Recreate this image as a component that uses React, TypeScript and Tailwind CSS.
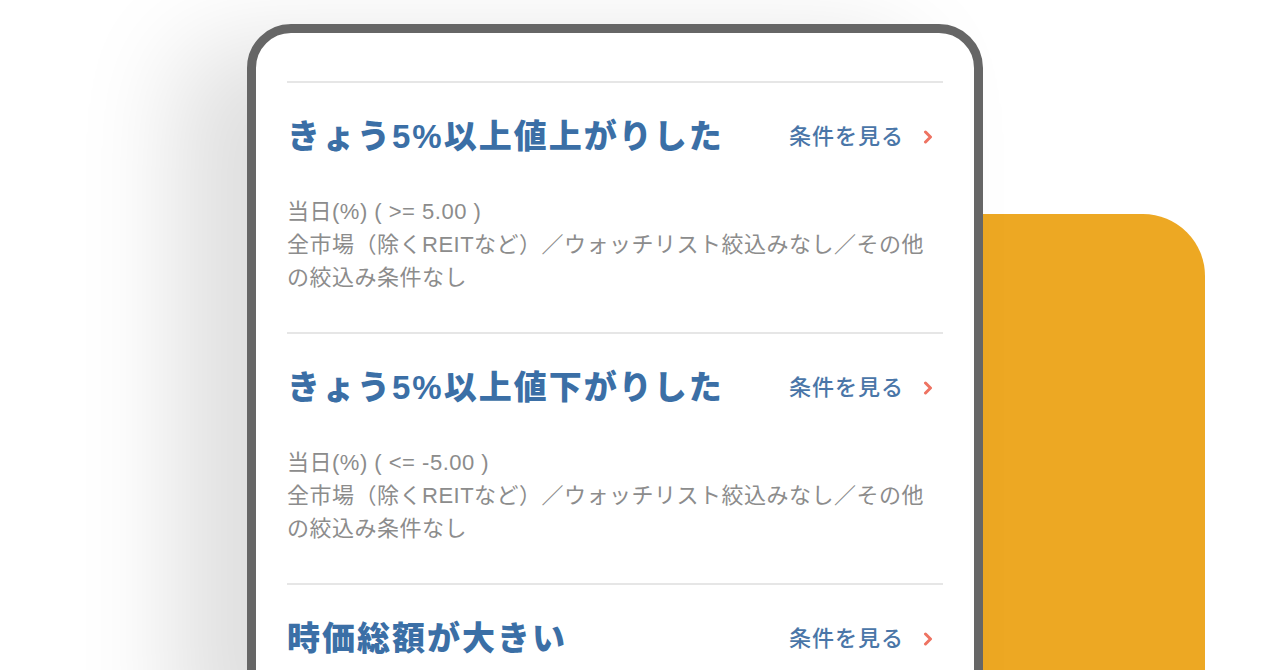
import React from "react";

const FONT = { fontFamily: '"Liberation Sans", "Noto Sans CJK JP", sans-serif' };

function Chevron() {
  return (
    <svg width="10" height="14" viewBox="0 0 10 14" className="shrink-0">
      <path d="M2.5 2 L7.5 7 L2.5 12" fill="none" stroke="#ee7362" strokeWidth="3" strokeLinecap="round" strokeLinejoin="round" />
    </svg>
  );
}

function Section({ title, lines }: { title: string; lines: string[] }) {
  return (
    <div>
      <div className="h-[2px] bg-[#e6e6e6]" />
      <div className="pt-[30px] h-[78px] flex items-center justify-between">
        <div className="text-[33px] font-black tracking-[2px] text-[#3b6fa6] leading-[48px] whitespace-nowrap">{title}</div>
        <div className="flex items-center pr-[10px]">
          <span className="text-[22px] font-medium tracking-[1px] text-[#4a76a8] leading-[30px] whitespace-nowrap">条件を見る</span>
          <span className="ml-[19px] flex items-center"><Chevron /></span>
        </div>
      </div>
      {lines.length > 0 && (
        <div className="mt-[34px] pb-[38px] text-[22px] tracking-[0.5px] leading-[33px] text-[#8c8c8c]">
          {lines.map((l, i) => (
            <div key={i} className="whitespace-nowrap">{l}</div>
          ))}
        </div>
      )}
    </div>
  );
}

export default function App() {
  return (
    <div className="relative w-[1280px] h-[670px] overflow-hidden bg-white" style={FONT}>
      <div className="absolute left-[900px] top-[214px] w-[305px] h-[520px] bg-[#eda823] rounded-tr-[62px]" />
      <div className="relative z-10 ml-[247px] mt-[24px] w-[736px] h-[720px] border-[9px] border-[#666666] rounded-t-[44px] bg-white px-[31px] pt-[48px] shadow-[-70px_20px_100px_rgba(0,0,0,0.13)]">
        <Section
          title="きょう5%以上値上がりした"
          lines={["当日(%) ( >= 5.00 )", "全市場（除くREITなど）／ウォッチリスト絞込みなし／その他", "の絞込み条件なし"]}
        />
        <Section
          title="きょう5%以上値下がりした"
          lines={["当日(%) ( <= -5.00 )", "全市場（除くREITなど）／ウォッチリスト絞込みなし／その他", "の絞込み条件なし"]}
        />
        <Section title="時価総額が大きい" lines={[]} />
      </div>
    </div>
  );
}
